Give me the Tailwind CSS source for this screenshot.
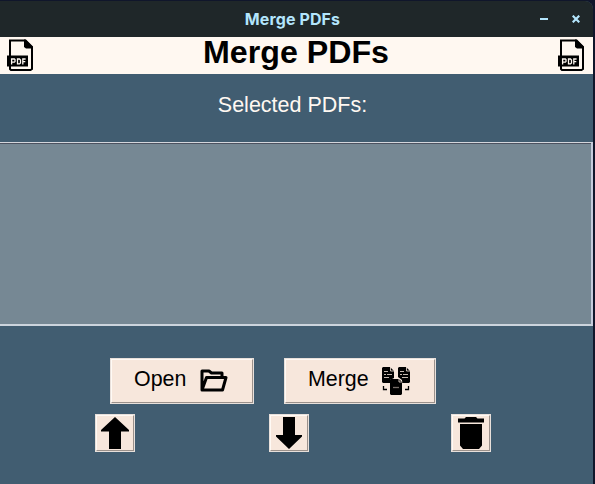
<!DOCTYPE html>
<html lang="en">
<head>
<meta charset="utf-8">
<title>Merge PDFs</title>
<script src="https://cdn.jsdelivr.net/npm/@tailwindcss/browser@4"></script>
</head>
<body class="w-[595px] h-[484px] overflow-hidden bg-[#10162b] pt-px pr-0.5 font-['Liberation_Sans',sans-serif]">
<svg class="hidden">
  <symbol id="pdf" viewBox="0 0 27 33">
    <path d="M3 1.500H18L25 8.500V30L23.500 31H4L3 30Z" fill="none" stroke="#000" stroke-width="2"/>
    <path d="M17 .5H19L26 7.500V9.500H19L17 8Z"/>
    <path d="M0 16.500H21V27.500H0Z"/>
    <path d="M4.600 25.500V20H7.400L8 20.600V22.600L7.400 23.200H4.600M10.500 20V24.900H12.500L13.500 24V21L12.500 20ZM15.800 25.500V20H18.600M15.800 22.700H18.300" fill="none" stroke="#fff8f1" stroke-width="1.300"/>
  </symbol>
</svg>
<div class="flex flex-col w-[593px] h-[483px] bg-[#415d71] rounded-tr-lg overflow-hidden">
  <header class="grid grid-cols-[1fr_auto_1fr] items-center h-9 shrink-0 bg-[#1f2729] text-[#b3e5fc]">
    <span></span>
    <span class="font-['Inter',sans-serif] font-bold text-[16px] leading-5 mr-2 tracking-[0.1px] whitespace-nowrap">Merge PDFs</span>
    <div class="flex justify-end items-center gap-6 pr-[13px]">
      <svg class="w-2 h-2" viewBox="0 0 8 8"><path d="M0 4H8" stroke="currentColor" stroke-width="2"/></svg>
      <svg class="w-2 h-2" viewBox="0 0 8 8"><path d="M.7.700L7.300 7.300M7.300.7L.7 7.300" stroke="currentColor" stroke-width="2.200"/></svg>
    </div>
  </header>
  <div class="flex justify-between items-start h-[37px] shrink-0 bg-[#fff8f1] pl-[7px] pr-[8px]">
    <svg class="w-[27px] h-[33px] mt-[2px]" viewBox="0 0 27 33"><use href="#pdf"/></svg>
    <h1 class="font-bold text-[32.2px] leading-[30px] text-black whitespace-nowrap">Merge PDFs</h1>
    <svg class="w-[27px] h-[33px] mt-[2px]" viewBox="0 0 27 33"><use href="#pdf"/></svg>
  </div>
  <div class="flex justify-center h-[68px] shrink-0 pt-[19px] pr-2 text-[21.5px] leading-6 text-[#fff8f1]">Selected PDFs:</div>
  <div class="h-[184px] shrink-0 bg-[#768894] border-t border-t-[#d4d6dc] border-r-2 border-r-[#c4cbdb] border-b-2 border-b-[#ccd4dd]"><div class="h-px bg-[#4c5260]"></div></div>
  <div class="flex gap-[30px] pl-[110px] mt-8 text-[21.4px] leading-6 text-black">
    <button class="flex w-[144px] h-[46px] bg-[#f7e7dc] border-2 border-t-[#fffaf5] border-l-[#fffaf5] border-r-[#9b918b] border-b-[#9b918b] outline outline-1 -outline-offset-1 outline-[#e8e0db] pl-[22px] pt-[7px]">
      <span class="w-[66px] text-left">Open</span>
      <svg class="w-7 h-6 mt-[1px]" viewBox="0 0 28 24"><path d="M2 22V3H9L11.500 5H22V9.500M2 22L6.500 9.500H26L22.500 22H2Z" fill="none" stroke="#000" stroke-width="3" stroke-linejoin="round"/></svg>
    </button>
    <button class="flex w-[152px] h-[46px] bg-[#f7e7dc] border-2 border-t-[#fffaf5] border-l-[#fffaf5] border-r-[#9b918b] border-b-[#9b918b] outline outline-1 -outline-offset-1 outline-[#e8e0db] pl-[22px] pt-[7px]">
      <span class="w-[74px] text-left">Merge</span>
      <svg class="w-7 h-7" viewBox="0 0 28 28">
        <path d="M1 0H8L12 4V11L8 13V16H1L0 15V1Z"/>
        <path d="M17 0H24L28 4V15L27 16H20V13L16 10V1Z"/>
        <path d="M2 4.500H6M2 7.500H4M5 7.500H10M2 10.500H7M18 4.500H22M18 7.500H20M21 7.500H26M20 10.500H26M8.500 0V4H12M24.500 0V4H28" fill="none" stroke="#f7e7dc" stroke-width=".8"/>
        <path d="M9 12H17L20 15V27L19 28H9L8 27V13Z"/>
        <path d="M11 20.500H17" stroke="#776e69" stroke-width="1.300"/>
        <path d="M17 11.500V15H20.500" fill="none" stroke="#f7e7dc" stroke-width=".8"/>
        <path d="M1.500 19V22.500H5M26.500 19V22.500H23" fill="none" stroke="#000" stroke-width="1.300"/>
      </svg>
    </button>
  </div>
  <div class="flex pl-[95px] mt-[10px]">
    <button class="w-10 h-[38px] bg-[#f7e7dc] border-2 border-t-[#fffaf5] border-l-[#fffaf5] border-r-[#9b918b] border-b-[#9b918b] outline outline-1 -outline-offset-1 outline-[#e8e0db]"><svg class="w-9 h-[34px]" viewBox="0 0 36 34"><path d="M18 1L32 14V15.500H24V33H12V15.500H4V14Z"/></svg></button>
    <button class="w-10 h-[38px] ml-[134px] bg-[#f7e7dc] border-2 border-t-[#fffaf5] border-l-[#fffaf5] border-r-[#9b918b] border-b-[#9b918b] outline outline-1 -outline-offset-1 outline-[#e8e0db]"><svg class="w-9 h-[34px]" viewBox="0 0 36 34"><path d="M12 1H24V19H31V20.500L18 33L5 20.500V19H12Z"/></svg></button>
    <button class="w-10 h-[38px] ml-[142px] bg-[#f7e7dc] border-2 border-t-[#fffaf5] border-l-[#fffaf5] border-r-[#9b918b] border-b-[#9b918b] outline outline-1 -outline-offset-1 outline-[#e8e0db]"><svg class="w-9 h-[34px]" viewBox="0 0 36 34"><path d="M13 1H23L24.500 2.500H31V6.500H5V2.500H11.500ZM7 8H29V29.500L26 33H10L7 29.500Z"/></svg></button>
  </div>
</div>
</body>
</html>
